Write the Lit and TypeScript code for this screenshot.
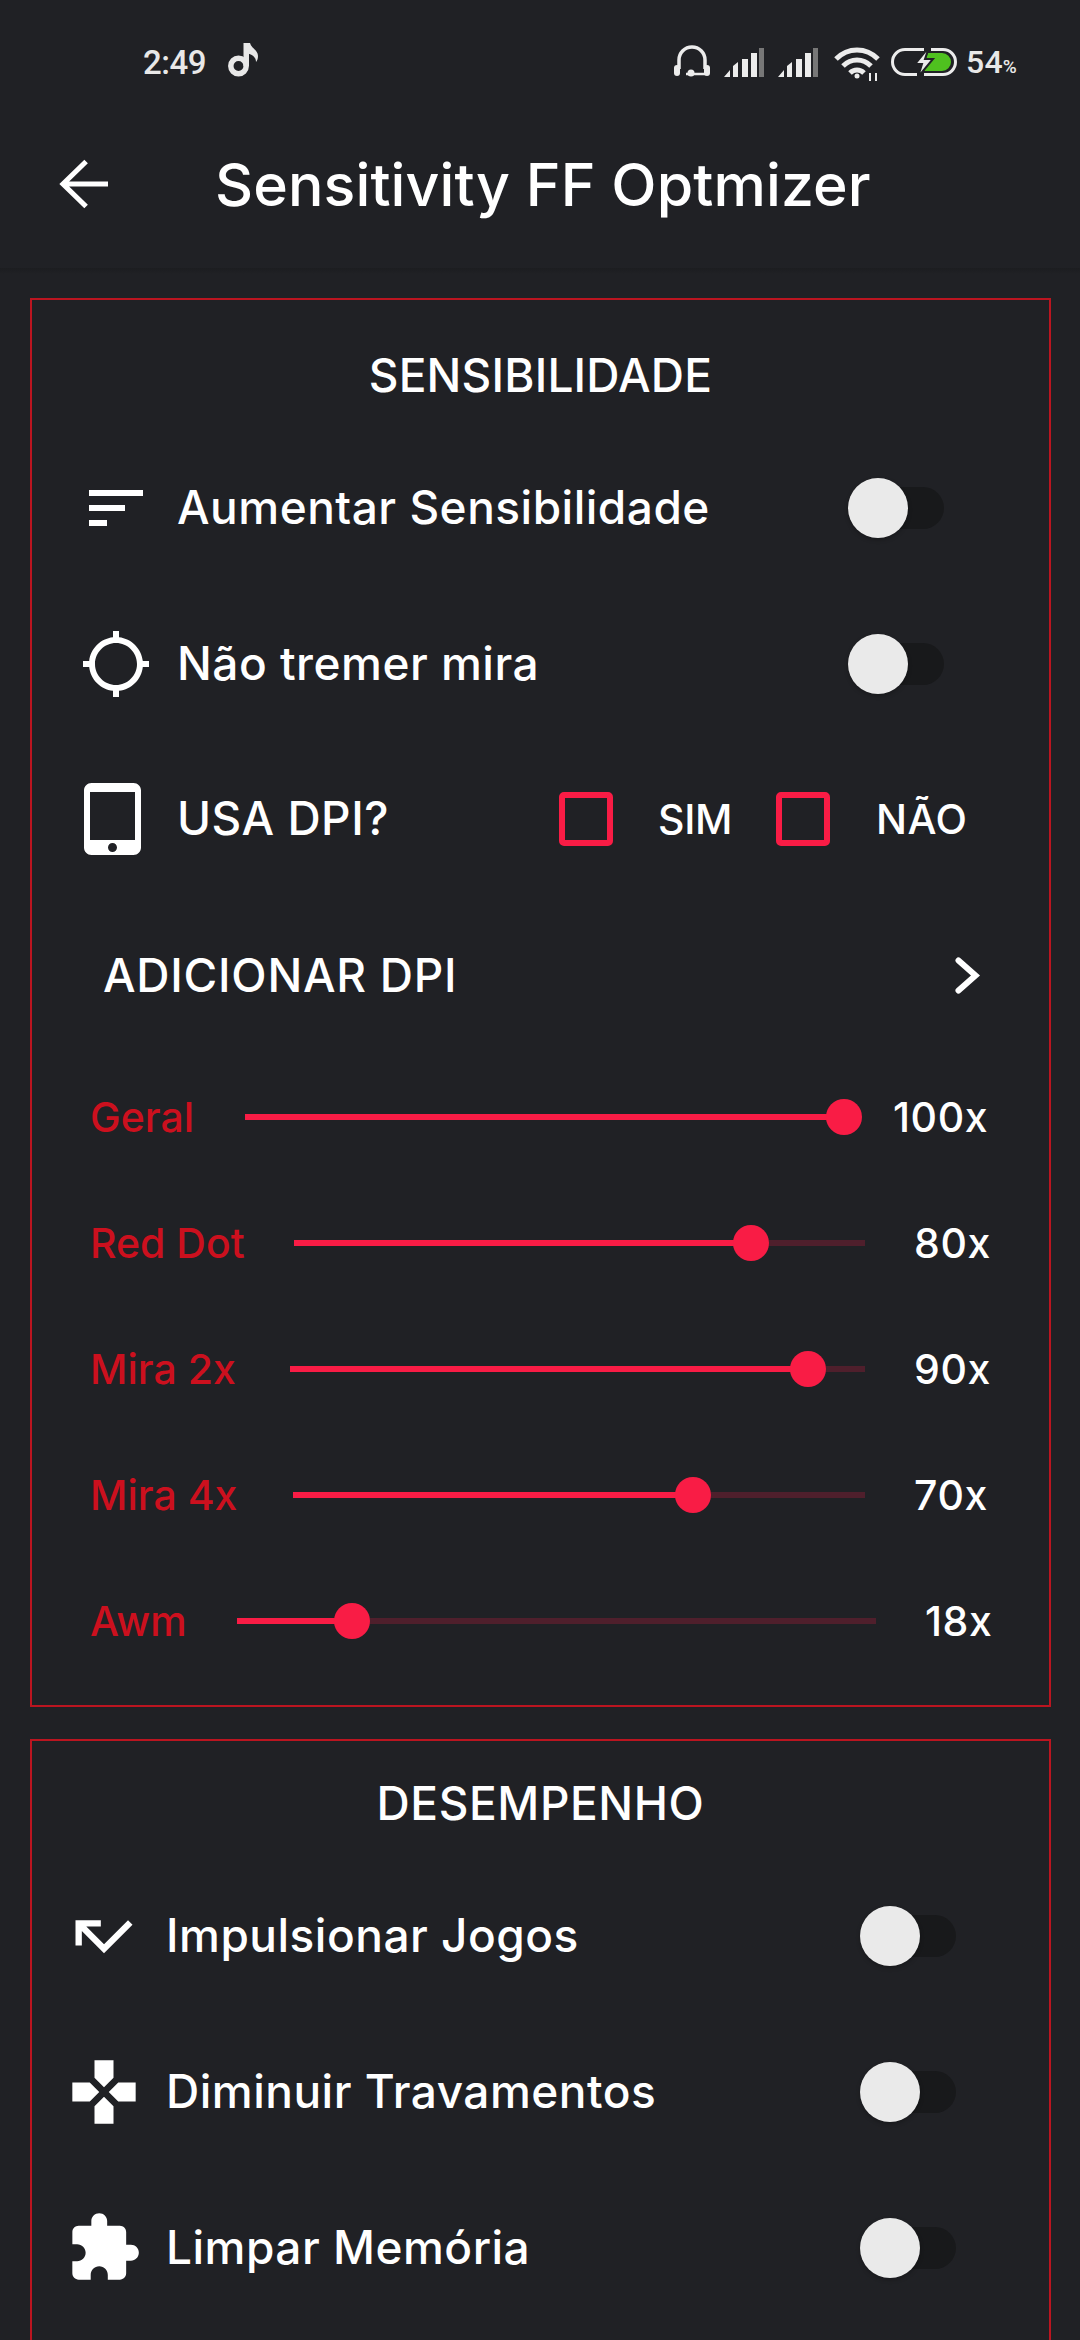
import { LitElement, html, css } from "lit";
import { customElement } from "lit/decorators.js";

const sliders = [
  { label: "Geral", pct: 100, lw: 106, vw: 95, val: "100x" },
  { label: "Red Dot", pct: 80, lw: 155, vw: 74, val: "80x" },
  { label: "Mira 2x", pct: 90, lw: 151, vw: 74, val: "90x" },
  { label: "Mira 4x", pct: 70, lw: 154, vw: 74, val: "70x" },
  { label: "Awm", pct: 18, lw: 98, vw: 63, val: "18x" },
];

const ICONS: Record<string, string> = {
  sort: "M3 18h6v-2H3v2zM3 6v2h18V6H3zm0 7h12v-2H3v2z",
  gps: "M20.94 11c-.46-4.17-3.77-7.48-7.94-7.94V1h-2v2.06C6.83 3.52 3.52 6.83 3.06 11H1v2h2.06c.46 4.17 3.77 7.48 7.94 7.94V23h2v-2.06c4.17-.46 7.48-3.77 7.94-7.94H23v-2h-2.06zM12 19c-3.87 0-7-3.13-7-7s3.13-7 7-7 7 3.13 7 7-3.13 7-7 7z",
  tablet: "M18.5 0h-14C3.12 0 2 1.12 2 2.5v19C2 22.88 3.12 24 4.5 24h14c1.38 0 2.5-1.12 2.5-2.5v-19C21 1.12 19.88 0 18.5 0zm-7 23c-.83 0-1.5-.67-1.5-1.5s.67-1.5 1.5-1.5 1.5.67 1.5 1.5-.67 1.5-1.5 1.5zm7.5-4H4V3h15v16z",
  missed: "M19.59 7L12 14.59 6.41 9H11V7H3v8h2v-4.59l7 7 9-9z",
  pad: "M15 7.5V2H9v5.5l3 3 3-3zM7.5 9H2v6h5.5l3-3-3-3zM9 16.5V22h6v-5.5l-3-3-3 3zM16.5 9l-3 3 3 3H22V9h-5.5z",
  puzzle: "M20.5 11H19V7c0-1.1-.9-2-2-2h-4V3.5C13 2.12 11.88 1 10.5 1S8 2.12 8 3.5V5H4c-1.1 0-1.99.9-1.99 2v3.8H3.5c1.49 0 2.7 1.21 2.7 2.7s-1.21 2.7-2.7 2.7H2V20c0 1.1.9 2 2 2h3.8v-1.5c0-1.49 1.21-2.7 2.7-2.7 1.49 0 2.7 1.21 2.7 2.7V22H17c1.1 0 2-.9 2-2v-4h1.5c1.38 0 2.5-1.12 2.5-2.5S21.88 11 20.5 11z",
};

const icon = (name: string) => html`<svg class="ico" viewBox="0 0 24 24"><path fill="#fff" d=${ICONS[name]}></path></svg>`;

const signal = html`<svg class="sig" viewBox="0 0 40 29">
  <path fill="#ececec" d="M0 29 L6 22 V29Z M9 18 L14 14 V29 H9Z M18 11 h6 V29 h-6Z M27 5 h6 V29 h-6Z"></path>
  <rect x="35" y="0" width="5" height="29" fill="#777"></rect>
</svg>`;

@customElement("app-root")
export class AppRoot extends LitElement {
  static styles = css`
    :host { display: block; width: 1080px; height: 2340px; overflow: hidden; background: #202125; color: #fff;
      font-family: Inter, "Noto Sans", sans-serif; }
    .status { height: 124px; display: flex; align-items: center; justify-content: space-between; padding: 0 63px 0 143px; box-sizing: border-box; }
    .st-left, .st-right { display: flex; align-items: center; }
    .time { font: 500 33px Roboto, sans-serif; color: #e8e8e8; letter-spacing: -0.5px; }
    .note { width: 32px; height: 34px; margin-left: 21px; margin-top: -4px; }
    .head { width: 36px; height: 32px; margin-top: -2px; }
    .sig { width: 40px; height: 29px; margin-left: 14px; }
    .wifi { width: 46px; height: 34px; margin-left: 16px; margin-top: 4px; }
    .batt { width: 66px; height: 28px; margin-left: 11px; }
    .pct { font: 500 32px Roboto, sans-serif; color: #e8e8e8; margin-left: 9px; letter-spacing: .2px; }
    .pct small { font-size: 19px; }
    .toolbar { height: 144px; box-sizing: border-box; padding: 0 0 24px 48px; display: flex; align-items: center; }
    .toolbar svg { width: 72px; height: 72px; }
    .title { font-size: 59px; font-weight: 500; margin-left: 95px; letter-spacing: .1px; }
    .shadow { height: 6px; margin-bottom: 24px; background: linear-gradient(#1c1d20, #202125); }
    main { display: flex; flex-direction: column; gap: 32px; padding: 0 29px 0 30px; }
    .card { border: 2px solid #bb1520; }
    .one { padding: 35px 0 21px; }
    .two { padding: 22px 0 60px; }
    h2 { margin: 0 0 15px; height: 80px; line-height: 80px; text-align: center; font-size: 46px; font-weight: 500; letter-spacing: .2px; }
    .two h2 { letter-spacing: .6px; }
    .row { height: 156px; display: flex; align-items: center; font-size: 46px; font-weight: 500; letter-spacing: .5px; }
    .row > span { padding-bottom: 2px; }
    .one .row { padding: 0 105px 0 48px; }
    .two .row { padding: 0 93px 0 34px; }
    .ico { width: 72px; height: 72px; flex: none; margin-right: 25px; }
    .two .ico { width: 76px; height: 76px; margin-right: 24px; }
    .one .row.dpi { height: 154px; }
    .dpi .ico { position: relative; left: -2px; }
    .grow { flex: 1; }
    .switch { position: relative; width: 96px; height: 42px; display: flex; justify-content: flex-end; }
    .track { width: 76px; height: 42px; border-radius: 21px; background: #18191b; }
    .thumb { position: absolute; left: 0; top: -9px; width: 60px; height: 60px; border-radius: 50%; background: #eaeaea; box-shadow: 0 2px 4px rgba(0,0,0,.25); }
    .checks { display: flex; align-items: center; font-size: 41px; letter-spacing: -.3px; margin-right: -24px; }
    .box { width: 54px; height: 54px; box-sizing: border-box; border: 6px solid #f91c45; border-radius: 5px; }
    .sim { margin: 0 48px 0 45px; width: 70px; }
    .nao { margin-left: 46px; width: 92px; letter-spacing: .5px; }
    .one .row.add { height: 158px; padding: 2px 62px 0 71px; box-sizing: border-box; justify-content: space-between; letter-spacing: .75px; }
    .add svg { width: 32px; height: 42px; margin-top: -2px; }
    .slider { height: 126px; padding: 0 61px 0 58px; display: flex; align-items: center; font-weight: 500; }
    .lab { color: #cc101e; white-space: nowrap; font-size: 41px; letter-spacing: 0; }
    .val { text-align: right; white-space: nowrap; font-size: 41px; letter-spacing: .6px; }
    .bar { flex: 1; margin: 0 49px; height: 6px; position: relative; background: #4f1f2c; }
    .fill { height: 100%; background: #f91c45; }
    .knob { position: absolute; top: -15px; width: 36px; height: 36px; margin-left: -18px; border-radius: 50%; background: #f91c45; }
  `;

  toggle() {
    return html`<div class="switch"><div class="track"></div><div class="thumb"></div></div>`;
  }

  render() {
    return html`
      <div class="status">
        <div class="st-left">
          <span class="time">2:49</span>
          <svg class="note" viewBox="0 0 32 34"><circle cx="11.500" cy="23" r="7.700" fill="none" stroke="#e8e8e8" stroke-width="5.500"></circle><path fill="#e8e8e8" d="M16.500 0h5.500v23h-5.500z"></path><path fill="#e8e8e8" d="M19 0h4c1 5 8 7 8 13 0 3-1 5-2 6 0-5-4-8-10-9z"></path></svg>
        </div>
        <div class="st-right">
          <svg class="head" viewBox="0 0 36 32"><path fill="none" stroke="#ececec" stroke-width="3.500" d="M5 24V15a13 13 0 0 1 26 0v9"></path><rect x="0" y="20" width="6" height="11" rx="3" fill="#ececec"></rect><rect x="30" y="20" width="6" height="11" rx="3" fill="#ececec"></rect><path stroke="#ececec" stroke-width="2.500" d="M12 29h20"></path><circle cx="17" cy="28" r="3.500" fill="#ececec"></circle></svg>
          ${signal}${signal}
          <svg class="wifi" viewBox="0 0 46 34" fill="none" stroke="#ececec" stroke-width="5"><path d="M2 12C14 0 32 0 44 12"></path><path d="M9 19c8-8 20-8 28 0"></path><path d="M16 26c4-4 10-4 14 0"></path><circle cx="23" cy="29" r="2.500" fill="#ececec" stroke="none"></circle><path stroke-width="2" d="M36 26v8M42 26v8"></path></svg>
          <svg class="batt" viewBox="0 0 66 28"><path fill="none" stroke="#ececec" stroke-width="3" d="M26 26.500H14a12.500 12.500 0 0 1 0-25H33M40 1.500H52a12.500 12.500 0 0 1 0 25H33"></path><path fill="#4fc11f" d="M37 5h14a9 9 0 0 1 0 18H33l6-9h-5z"></path><path fill="#ececec" stroke="#202125" stroke-width="2" d="M38-1 24 16h7l-4 13 15-18h-8z"></path></svg>
          <span class="pct">54<small>%</small></span>
        </div>
      </div>
      <div class="toolbar">
        <svg viewBox="0 0 24 24"><path fill="none" stroke="#fff" stroke-width="1.700" d="M20 12H5M12.700 4.500 5 12l7.700 7.500"></path></svg>
        <span class="title">Sensitivity FF Optmizer</span>
      </div>
      <div class="shadow"></div>
      <main>
        <section class="card one">
          <h2>SENSIBILIDADE</h2>
          <div class="row">${icon("sort")}<span class="grow">Aumentar Sensibilidade</span>${this.toggle()}</div>
          <div class="row">${icon("gps")}<span class="grow">Não tremer mira</span>${this.toggle()}</div>
          <div class="row dpi">${icon("tablet")}<span class="grow">USA DPI?</span>
            <div class="checks"><div class="box"></div><span class="sim">SIM</span><div class="box"></div><span class="nao">NÃO</span></div>
          </div>
          <div class="row add"><span>ADICIONAR DPI</span>
            <svg viewBox="0 0 32 42"><path fill="none" stroke="#fff" stroke-width="6" stroke-linecap="round" d="M3.500 6.500 20.500 21.500 3.500 36.500"></path></svg>
          </div>
          ${sliders.map((s) => html`
            <div class="slider">
              <span class="lab" style="width:${s.lw}px">${s.label}</span>
              <div class="bar"><div class="fill" style="width:${s.pct}%"></div><div class="knob" style="left:${s.pct}%"></div></div>
              <span class="val" style="width:${s.vw}px">${s.val}</span>
            </div>`)}
        </section>
        <section class="card two">
          <h2>DESEMPENHO</h2>
          <div class="row">${icon("missed")}<span class="grow">Impulsionar Jogos</span>${this.toggle()}</div>
          <div class="row">${icon("pad")}<span class="grow">Diminuir Travamentos</span>${this.toggle()}</div>
          <div class="row">${icon("puzzle")}<span class="grow">Limpar Memória</span>${this.toggle()}</div>
        </section>
      </main>
    `;
  }
}
